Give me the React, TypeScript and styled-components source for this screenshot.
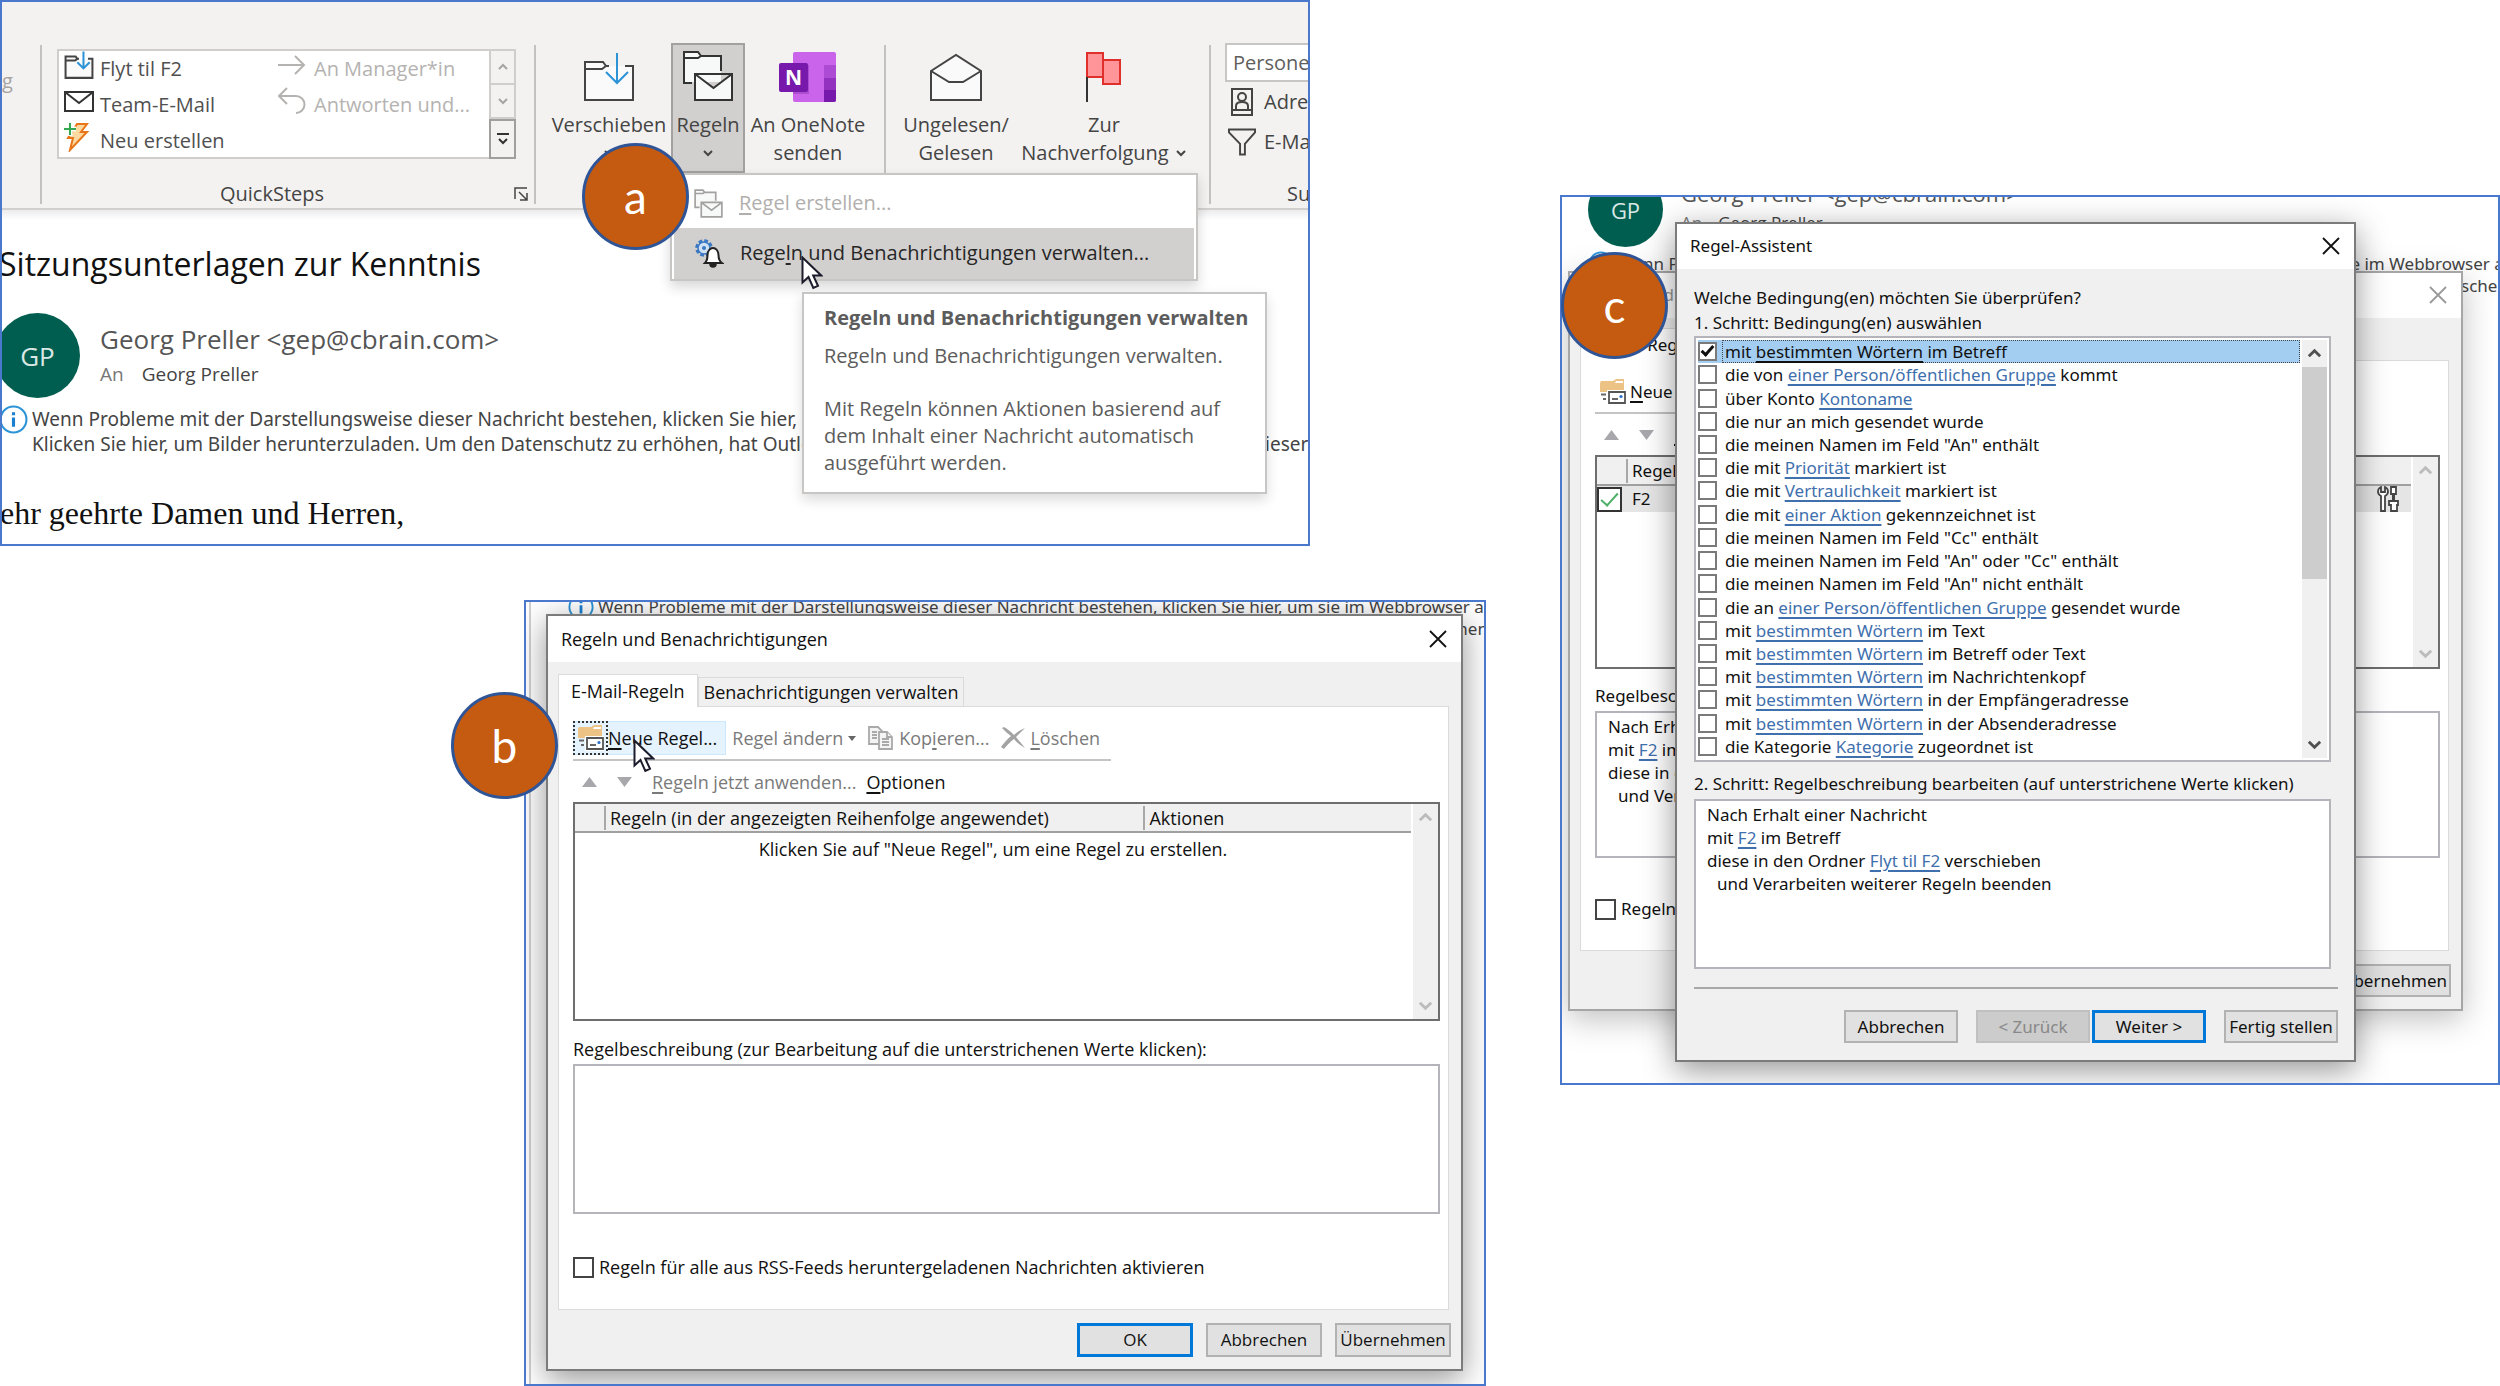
import React from 'react';
import styled, { createGlobalStyle, css, ThemeProvider } from 'styled-components';

const GlobalStyle = createGlobalStyle`
  *, *::before, *::after { box-sizing: border-box; }
  body { margin: 0; background: #fff; color: #111; font-family: "Open Sans", "Noto Sans", sans-serif; }
  button, input { font: inherit; color: inherit; margin: 0; }
`;

/* ---------- page ---------- */

const Page = styled.main`
  display: grid;
  grid-template-columns: minmax(0, 1486fr) minmax(0, 940fr);
  column-gap: 74px;
  align-items: start;
`;

const Column = styled.div<{ $top?: number }>`
  display: flex;
  flex-direction: column;
  padding-top: ${p => p.$top ?? 0}px;
`;

const Figure = styled.section<{ $indent?: number; $outdent?: number; $top?: number }>`
  position: relative;
  margin: ${p => p.$top ?? 0}px ${p => p.$outdent ?? 0}px 0 ${p => p.$indent ?? 0}px;
`;

const Shot = styled.div`
  position: relative;
  overflow: hidden;
  border: 2px solid #4a78cc;
  background: #fff;
`;

const Badge = styled.span<{ $left: number; $top: number }>`
  position: absolute;
  left: ${p => p.$left}px;
  top: ${p => p.$top}px;
  z-index: 5;
  width: 107px;
  height: 107px;
  display: flex;
  align-items: center;
  justify-content: center;
  border: 3px solid #2f5597;
  border-radius: 50%;
  background: #c55a11;
  color: #fff;
  font: 46px/60px Lato, "Open Sans", sans-serif;
`;

const Pointer = styled.svg<{ $left: number; $top: number }>`
  position: absolute;
  left: ${p => p.$left}px;
  top: ${p => p.$top}px;
  z-index: 4;
  width: 22px;
  height: 34px;
`;

const Cursor = ({ left, top }: { left: number; top: number }) => (
  <Pointer $left={left} $top={top} viewBox="0 0 22 34" aria-hidden="true">
    <path d="M1.5 1.5v25l6-5.500 4.800 11 4.700-2.200-4.800-10.300h8z" fill="#fff" stroke="#1c1c2c" strokeWidth="2" />
  </Pointer>
);

/* ---------- icons ---------- */

const FolderDown = ({ w, h, stroke }: { w: number; h: number; stroke: number }) => (
  <svg width={w} height={h} viewBox="0 0 52 50" fill="none" strokeWidth={stroke} aria-hidden="true">
    <path d="M2 10h18l3 4h27v34H2z" fill="#fafafa" />
    <path d="M26 14h-3l-3-4H2v38h48V14h-8M2 17h17l4-3" stroke="#444" />
    <path d="M34 1v30M23 20l11 11 11-11" stroke="#2b93d6" />
  </svg>
);

const RulesIcon = ({ size, ink, stroke }: { size: number; ink: string; stroke: number }) => (
  <svg width={size} height={size} viewBox="0 0 52 52" fill="none" stroke={ink} strokeWidth={stroke} aria-hidden="true">
    <path d="M2 2h14l3 4h20v26H2z" fill="#f6f9f8" stroke="none" />
    <path d="M10 33H2V2h14l3 4h20v15M2 8h14l3-2" />
    <path d="M13 24h37v26H13zM13 24l18.500 14L50 24" fill="#f6f9f8" />
  </svg>
);

const OneNoteIcon = () => (
  <svg width="58" height="50" viewBox="0 0 58 50" aria-hidden="true">
    <path d="M16 0h39a2 2 0 0 1 2 2v46a2 2 0 0 1-2 2H16a2 2 0 0 1-2-2V2a2 2 0 0 1 2-2z" fill="#ca64ea" />
    <path d="M45 13h12v13H45z" fill="#ae4bd5" />
    <path d="M45 26h12v12H45z" fill="#9332bf" />
    <path d="M45 38h12v10a2 2 0 0 1-2 2H45z" fill="#7719aa" />
    <path d="M14 13h16v29H14z" fill="#9a3fc0" opacity=".6" />
    <rect x="0" y="11" width="29" height="29" rx="2" fill="#7719aa" />
    <text x="14.500" y="33" textAnchor="middle" fontFamily="Open Sans" fontWeight="700" fontSize="21" fill="#fff">N</text>
  </svg>
);

const OpenMail = () => (
  <svg width="52" height="50" viewBox="0 0 52 50" fill="#fafafa" stroke="#444" strokeWidth="2" aria-hidden="true">
    <path d="M1 19L26 3l25 16v29H1z" />
    <path d="M1 19l18 11h14l18-11" fill="none" />
  </svg>
);

const FlagIcon = () => (
  <svg width="36" height="50" viewBox="0 0 36 50" aria-hidden="true">
    <path d="M1 1h16v24H1z" fill="#ff9499" stroke="#e0302c" strokeWidth="2" />
    <path d="M17 8h17v24H17z" fill="#ff9499" stroke="#e0302c" strokeWidth="2" />
    <path d="M1 25v25" stroke="#333" strokeWidth="2" />
  </svg>
);

const MailIcon = () => (
  <svg width="30" height="21" viewBox="0 0 30 21" fill="#fff" stroke="#333" strokeWidth="2" aria-hidden="true">
    <path d="M1 1h28v19H1zM1 1l14 11L29 1" />
  </svg>
);

const BoltIcon = () => (
  <svg width="26" height="30" viewBox="0 0 26 30" aria-hidden="true">
    <path d="M13 2h10l-6 8h6L6 28l3-12H4z" fill="#fbd9a0" stroke="#e8751a" strokeWidth="2" />
    <path d="M6 0v14M0 7h12" stroke="#f7fff7" strokeWidth="5" />
    <path d="M6 1v12M0 7h12" stroke="#35a853" strokeWidth="2" />
  </svg>
);

const ArrowRight = () => (
  <svg width="28" height="20" viewBox="0 0 28 20" fill="none" stroke="#b5b3b1" strokeWidth="2" aria-hidden="true">
    <path d="M0 10h26M17 1l9 9-9 9" />
  </svg>
);

const ReplyIcon = () => (
  <svg width="28" height="28" viewBox="0 0 28 28" fill="none" stroke="#b5b3b1" strokeWidth="2" aria-hidden="true">
    <path d="M9 1L1 9l8 8M1 9h17a8.500 8.500 0 0 1 0 17" />
  </svg>
);

const BookIcon = () => (
  <svg width="24" height="28" viewBox="0 0 24 28" fill="none" stroke="#444" strokeWidth="2" aria-hidden="true">
    <path d="M2 1h20v26H2zM2 22h20M6 22v-4c0-3 3-4 6-4s6 1 6 4v4" />
    <circle cx="12" cy="9" r="4" />
  </svg>
);

const FunnelIcon = () => (
  <svg width="29" height="28" viewBox="0 0 29 28" fill="none" stroke="#444" strokeWidth="2" aria-hidden="true">
    <path d="M1 1h27v3L17.500 16v11h-5V16L1 4z" />
  </svg>
);

const GearBell = () => (
  <svg width="30" height="30" viewBox="0 0 30 30" fill="none" aria-hidden="true">
    <circle cx="10" cy="10" r="7" stroke="#3a78c2" strokeWidth="3.500" strokeDasharray="3.600 1.900" />
    <circle cx="10" cy="10" r="6" fill="#cfe2f5" stroke="#3a78c2" strokeWidth="1.500" />
    <circle cx="10" cy="10" r="2" fill="#3a78c2" />
    <path d="M11 25c2-2 2.500-4 2.500-8 0-4 2.500-7 5.500-7s5.500 3 5.500 7c0 4 .5 6 3.500 8z" fill="#fff" stroke="#222" strokeWidth="2" />
    <path d="M16 26a3 3 0 0 0 6 0" fill="#222" stroke="#222" strokeWidth="1.500" />
  </svg>
);

const Launcher = () => (
  <svg width="14" height="14" viewBox="0 0 14 14" fill="none" stroke="#444" strokeWidth="1.500" aria-hidden="true">
    <path d="M1 12V1h12M5 5l8 8M13 6v7H6" />
  </svg>
);

const Chevron = ({ up, ink, size = 12, bar, stroke = 2 }: { up?: boolean; ink: string; size?: number; bar?: boolean; stroke?: number }) => (
  <svg width={size} height={size} viewBox="0 0 12 12" fill="none" stroke={ink} strokeWidth={stroke} aria-hidden="true">
    <path d={up ? 'M2 8l4-4 4 4' : bar ? 'M2 6l4 4 4-4M0 1h12' : 'M2 4l4 4 4-4'} />
  </svg>
);

const InfoIcon = ({ size }: { size: number }) => (
  <svg width={size} height={size} viewBox="0 0 28 28" fill="none" aria-hidden="true">
    <circle cx="14" cy="14" r="12.500" stroke="#2b93d6" strokeWidth="2" />
    <path d="M14 12v9M14 7v3" stroke="#1a7fd0" strokeWidth="3" />
  </svg>
);

const NewRuleIcon = () => (
  <svg width="26" height="26" viewBox="0 0 26 26" aria-hidden="true">
    <path d="M0 4l1-2h12l3-2h8v13H0z" fill="#edc385" />
    <path d="M16 2h7v2h-8z" fill="#fff" />
    <path d="M7 11h19v15H7z" fill="#fff" />
    <path d="M9 13h16v11H9z" fill="#fff" stroke="#555" strokeWidth="1.800" />
    <path d="M12 20h6M1 15.500h5M3 20h3" stroke="#666" strokeWidth="1.800" />
    <circle cx="21" cy="17.500" r="1.600" fill="#2a6fc9" />
  </svg>
);

const CopyIcon = () => (
  <svg width="26" height="24" viewBox="0 0 26 24" fill="#f4f4f4" stroke="#a9a9a9" strokeWidth="1.800" aria-hidden="true">
    <path d="M1 1h9l4 4v13H1z" />
    <path d="M4 6h5M4 9h5M4 12h5" />
    <path d="M11 6h8l5 5v12H11z" />
    <path d="M19 6v5h5M14 13h7M14 16h7M14 19h7" />
  </svg>
);

const DeleteIcon = () => (
  <svg width="24" height="22" viewBox="0 0 24 22" fill="#a3a3a3" aria-hidden="true">
    <path d="M3 0c4 2 7 5 10 8 3-3 6-5 11-7-3 3-6 6-9 9 3 4 6 7 9 11-4-2-8-5-11-9-4 3-7 6-10 10L0 20c3-4 6-8 10-11C7 7 4 4 1 1z" />
  </svg>
);

const ToolsIcon = () => (
  <svg width="22" height="26" viewBox="0 0 22 26" fill="#fff" stroke="#444" strokeWidth="1.800" aria-hidden="true">
    <path d="M4 1C0 3 0 8 4 10v15h4V10c4-2 4-7 0-9v5H4z" />
    <path d="M14 1h5v7h-5zM12 15h9v4h-1v6h-6v-6h-2z" />
    <path d="M16.500 8v7" strokeWidth="3" />
  </svg>
);

const CloseIcon = ({ ink }: { ink: string }) => (
  <svg width="18" height="18" viewBox="0 0 18 18" stroke={ink} strokeWidth="1.800" aria-hidden="true">
    <path d="M1 1l16 16M17 1L1 17" />
  </svg>
);

const Triangle = ({ up }: { up?: boolean }) => (
  <svg width="15" height="10" viewBox="0 0 15 10" fill="#a8a8ac" aria-hidden="true">
    <path d={up ? 'M0 10L7.500 0 15 10z' : 'M0 0h15L7.500 10z'} />
  </svg>
);

/* ---------- figure a: ribbon and mail ---------- */

const Ribbon = styled.header`
  display: flex;
  height: 208px;
  padding-top: 41px;
  overflow: hidden;
  background: #f3f2f1;
  border-bottom: 2px solid #d2d0ce;
  color: #444;
  font-size: 20px;
  line-height: 28px;
  white-space: nowrap;
`;

const RibbonShade = styled.div`
  height: 10px;
  background: linear-gradient(#ececec, #fff);
`;

const RibbonEdge = styled.div`
  width: 38px;
  flex: none;
  padding-top: 24px;
  color: #a6a4a2;
`;

const Group = styled.div<{ $width?: number }>`
  display: flex;
  flex-direction: column;
  justify-content: space-between;
  flex: ${p => (p.$width ? `0 0 ${p.$width}px` : '1 0 auto')};
  height: 159px;
  margin-top: 2px;
  border-left: 2px solid #c4c2c0;
`;

const GroupTitle = styled.div`
  display: flex;
  align-items: center;
  justify-content: center;
  padding-right: 6px;
  height: 20px;
`;

const TitleText = styled.span`
  flex: 1;
  text-align: center;
  padding-right: 12px;
`;

const PlainButton = styled.button`
  display: inline-flex;
  align-items: center;
  justify-content: center;
  padding: 0;
  border: 0;
  background: none;
`;

const Gallery = styled.div`
  display: flex;
  margin: 4px 18px 0 15px;
  height: 110px;
  background: #fff;
  border: 2px solid #d0cecc;
`;

const GalleryGrid = styled.div`
  flex: 1;
  display: grid;
  grid-template-columns: 214px 1fr;
  grid-template-rows: repeat(3, 36px);
  padding-left: 5px;
`;

const QuickStep = styled.button<{ $off?: boolean }>`
  display: flex;
  align-items: flex-start;
  gap: 6px;
  padding: 4px 0 0;
  border: 0;
  background: none;
  color: ${p => (p.$off ? '#b5b3b1' : '#505050')};
  svg { flex: none; }
`;

const StepIcon = styled.span`
  width: 30px;
  height: 30px;
  margin-top: -5px;
  display: flex;
  justify-content: flex-start;
  align-items: center;
`;

const GalleryScroll = styled.div`
  width: 25px;
  display: grid;
  grid-template-rows: 34px 34px 1fr;
`;

const ScrollKey = styled.button<{ $strong?: boolean }>`
  display: flex;
  align-items: center;
  justify-content: center;
  padding: 0;
  background: #f3f2f1;
  border: 0 solid #d0cecc;
  border-left-width: 2px;
  border-bottom-width: 2px;
  ${p => p.$strong && css`
    border: 2px solid #a19f9d;
    margin: 0 -2px -2px 0;
  `}
`;

const Buttons = styled.div<{ $pad: number }>`
  display: flex;
  margin-top: -2px;
  padding-left: ${p => p.$pad}px;
`;

const BigButton = styled.button<{ $width: number; $open?: boolean }>`
  width: ${p => p.$width}px;
  height: 130px;
  flex: none;
  display: flex;
  flex-direction: column;
  align-items: center;
  gap: 9px;
  padding: 7px 0 0;
  border: 2px solid ${p => (p.$open ? '#a3a19f' : 'transparent')};
  background: ${p => (p.$open ? '#d2d0ce' : 'none')};
`;

const BigIcon = styled.span`
  height: 50px;
  display: flex;
  align-items: flex-end;
`;

const BigLabel = styled.span`
  display: flex;
  flex-direction: column;
  align-items: center;
`;

const LabelLine = styled.span`
  height: 28px;
  display: flex;
  align-items: center;
  gap: 6px;
`;

const SearchGroup = styled.div`
  display: flex;
  flex-direction: column;
  margin-top: -2px;
  padding-left: 14px;
`;

const SearchBox = styled.input`
  width: 220px;
  height: 39px;
  padding: 0 6px;
  border: 2px solid #c8c6c4;
  background: #fff;
  &::placeholder { color: #605e5c; opacity: 1; }
`;

const SearchRow = styled.button`
  display: flex;
  align-items: center;
  gap: 8px;
  height: 40px;
  padding: 0 0 0 3px;
  border: 0;
  background: none;
  svg { width: 28px; }
`;

const SearchTitle = styled.span`
  padding-left: 76px;
  line-height: 20px;
`;

const Mail = styled.article`
  margin-left: -3px;
  padding: 22px 0 13px;
`;

const Subject = styled.h1`
  margin: 0;
  font-weight: 400;
  font-size: 32px;
  line-height: 44px;
  color: #111;
`;

const Sender = styled.div`
  display: flex;
  gap: 20px;
  margin: 27px 0 0 -4px;
`;

const Avatar = styled.span<{ $size: number }>`
  width: ${p => p.$size}px;
  height: ${p => p.$size}px;
  flex: none;
  display: flex;
  align-items: center;
  justify-content: center;
  border-radius: 50%;
  background: #005e50;
  color: #d9e8e4;
  font-size: ${p => (p.$size > 80 ? 26 : 22)}px;
`;

const SenderLines = styled.div<{ $small?: boolean }>`
  display: flex;
  flex-direction: column;
  gap: ${p => (p.$small ? 3 : 5)}px;
  padding-top: ${p => (p.$small ? 6 : 8)}px;
  color: #444;
`;

const SenderName = styled.span<{ $small?: boolean }>`
  font-size: ${p => (p.$small ? 22 : 26)}px;
  line-height: ${p => (p.$small ? 30 : 36)}px;
  color: #555;
`;

const Recipient = styled.span<{ $small?: boolean }>`
  display: flex;
  gap: ${p => (p.$small ? 16 : 18)}px;
  font-size: ${p => (p.$small ? 17 : 19)}px;
  line-height: 24px;
`;

const Muted = styled.span`
  color: #777;
`;

const InfoBar = styled.div<{ $small?: boolean }>`
  display: flex;
  gap: 4px;
  margin: ${p => (p.$small ? 0 : '7px 0 0')};
  font-family: "Noto Sans", "Open Sans", sans-serif;
  font-size: ${p => (p.$small ? 17 : 19)}px;
  line-height: ${p => (p.$small ? 22 : 25)}px;
  color: #444;
  white-space: nowrap;
  svg { flex: none; }
`;

const InfoLines = styled.span<{ $small?: boolean }>`
  display: flex;
  flex-direction: column;
  padding-top: 2px;
`;

const InfoLine = styled.span`
  display: flex;
  gap: 18px;
`;

const Greeting = styled.p`
  margin: 38px 0 0;
  padding-left: 1px;
  font-family: "Liberation Serif", serif;
  font-size: 32px;
  line-height: 36px;
  color: #111;
`;

const Menu = styled.div`
  position: absolute;
  left: 670px;
  top: 173px;
  z-index: 2;
  width: 528px;
  height: 108px;
  padding: 0 2px;
  display: grid;
  grid-template-rows: 53px 51px;
  border: 2px solid #c8c6c4;
  background: #fff;
  box-shadow: 0 6px 12px rgba(0, 0, 0, 0.16);
  font-size: 20px;
  line-height: 28px;
`;

const MenuItem = styled.button<{ $hover?: boolean; $off?: boolean }>`
  display: flex;
  align-items: center;
  gap: 16px;
  padding: ${p => (p.$off ? '3px 0 0 20px' : '0 0 2px 20px')};
  border: 0;
  background: ${p => (p.$hover ? '#d2d0ce' : 'none')};
  color: ${p => (p.$off ? '#b1afad' : '#262626')};
`;

const Tooltip = styled.div`
  position: absolute;
  left: 802px;
  top: 292px;
  z-index: 3;
  width: 465px;
  height: 202px;
  padding: 10px 0 0 20px;
  border: 2px solid #c8c6c4;
  background: #fff;
  box-shadow: 0 6px 12px rgba(0, 0, 0, 0.14);
  color: #5c5c5c;
  font-size: 20px;
  line-height: 27px;
  white-space: nowrap;
`;

const TipTitle = styled.strong`
  display: block;
  margin-bottom: 11px;
`;

const TipText = styled.p`
  margin: 0 0 26px;
`;

const U = styled.u`
  text-underline-offset: 3px;
  text-decoration-thickness: 2px;
`;

const Info = ({ small }: { small?: boolean }) => (
  <InfoBar $small={small}>
    <InfoIcon size={small ? 26 : 29} />
    <InfoLines>
      <InfoLine>Wenn Probleme mit der Darstellungsweise dieser Nachricht bestehen, klicken Sie hier, um sie im Webbrowser anzuzeigen.</InfoLine>
      <InfoLine>
        <span>Klicken Sie hier, um Bilder herunterzuladen. Um den Datenschutz zu erhöhen, hat Outlook</span>
        <span>den automatischen Download von Bildern in dieser Nachricht verhindert.</span>
      </InfoLine>
    </InfoLines>
  </InfoBar>
);

function RibbonFigure() {
  return (
    <Figure $outdent={176}>
      <Shot>
        <Ribbon>
          <RibbonEdge>g</RibbonEdge>
          <Group $width={494}>
            <Gallery>
              <GalleryGrid>
                <QuickStep><StepIcon><FolderDown w={30} h={28} stroke={3.6} /></StepIcon>Flyt til F2</QuickStep>
                <QuickStep $off><StepIcon><ArrowRight /></StepIcon>An Manager*in</QuickStep>
                <QuickStep><StepIcon><MailIcon /></StepIcon>Team-E-Mail</QuickStep>
                <QuickStep $off><StepIcon><ReplyIcon /></StepIcon>Antworten und...</QuickStep>
                <QuickStep><StepIcon><BoltIcon /></StepIcon>Neu erstellen</QuickStep>
              </GalleryGrid>
              <GalleryScroll>
                <ScrollKey aria-label="Nach oben"><Chevron up ink="#a6a4a2" /></ScrollKey>
                <ScrollKey aria-label="Nach unten"><Chevron ink="#a6a4a2" /></ScrollKey>
                <ScrollKey $strong aria-label="Mehr"><Chevron bar ink="#333" /></ScrollKey>
              </GalleryScroll>
            </Gallery>
            <GroupTitle>
              <TitleText>QuickSteps</TitleText>
              <PlainButton aria-label="QuickSteps verwalten"><Launcher /></PlainButton>
            </GroupTitle>
          </Group>
          <Group $width={350}>
            <Buttons $pad={11}>
              <BigButton $width={124}>
                <BigIcon><FolderDown w={52} h={50} stroke={2} /></BigIcon>
                <BigLabel><LabelLine>Verschieben</LabelLine><LabelLine><Chevron ink="#444" /></LabelLine></BigLabel>
              </BigButton>
              <BigButton $width={74} $open>
                <BigIcon><RulesIcon size={52} ink="#333" stroke={2} /></BigIcon>
                <BigLabel><LabelLine>Regeln</LabelLine><LabelLine><Chevron ink="#444" /></LabelLine></BigLabel>
              </BigButton>
              <BigButton $width={126}>
                <BigIcon><OneNoteIcon /></BigIcon>
                <BigLabel><LabelLine>An OneNote</LabelLine><LabelLine>senden</LabelLine></BigLabel>
              </BigButton>
            </Buttons>
          </Group>
          <Group $width={325}>
            <Buttons $pad={13}>
              <BigButton $width={114}>
                <BigIcon><OpenMail /></BigIcon>
                <BigLabel><LabelLine>Ungelesen/</LabelLine><LabelLine>Gelesen</LabelLine></BigLabel>
              </BigButton>
              <BigButton $width={182}>
                <BigIcon><FlagIcon /></BigIcon>
                <BigLabel><LabelLine>Zur</LabelLine><LabelLine>Nachverfolgung <Chevron ink="#444" /></LabelLine></BigLabel>
              </BigButton>
            </Buttons>
          </Group>
          <Group>
            <SearchGroup>
              <SearchBox aria-label="Personen suchen" placeholder="Personen suchen" />
              <SearchRow><BookIcon />Adressbuch</SearchRow>
              <SearchRow><FunnelIcon />E-Mail filtern</SearchRow>
            </SearchGroup>
            <SearchTitle>Suchen</SearchTitle>
          </Group>
        </Ribbon>
        <RibbonShade />
        <Mail>
          <Subject>Sitzungsunterlagen zur Kenntnis</Subject>
          <Sender>
            <Avatar $size={85}>GP</Avatar>
            <SenderLines>
              <SenderName>Georg Preller &lt;gep@cbrain.com&gt;</SenderName>
              <Recipient><Muted>An</Muted>Georg Preller</Recipient>
            </SenderLines>
          </Sender>
          <Info />
          <Greeting>ehr geehrte Damen und Herren,</Greeting>
        </Mail>
      </Shot>
      <Menu>
        <MenuItem $off><RulesIcon size={29} ink="#a3a19f" stroke={3} /><span><U>R</U>egel erstellen...</span></MenuItem>
        <MenuItem $hover><GearBell /><span>Rege<U>l</U>n und Benachrichtigungen verwalten...</span></MenuItem>
      </Menu>
      <Tooltip role="tooltip">
        <TipTitle>Regeln und Benachrichtigungen verwalten</TipTitle>
        <TipText>Regeln und Benachrichtigungen verwalten.</TipText>
        <TipText>Mit Regeln können Aktionen basierend auf<br />dem Inhalt einer Nachricht automatisch<br />ausgeführt werden.</TipText>
      </Tooltip>
      <Cursor left={801} top={256} />
      <Badge $left={582} $top={143}>a</Badge>
    </Figure>
  );
}

/* ---------- dialogs ---------- */

const regular = {
  font: '"Open Sans", "Noto Sans", sans-serif', size: 18, buttonSize: 17, titleBar: 46, tabsTop: 12, toolTop: 14, key: 34,
  tableHeight: 219, labelTop: 16, areaHeight: 150, tickTop: 41, panelEnd: 30, footTop: 13, footEnd: 12,
  buttonWidth: 116, buttonHeight: 34, gap: 13,
};
const compact = {
  font: '"Noto Sans", "Open Sans", sans-serif', size: 17, buttonSize: 17, titleBar: 45, tabsTop: 10, toolTop: 14, key: 33,
  tableHeight: 214, labelTop: 15, areaHeight: 147, tickTop: 39, panelEnd: 29, footTop: 13, footEnd: 12,
  buttonWidth: 114, buttonHeight: 33, gap: 13,
};
type Metrics = typeof regular;
const m = (k: keyof Metrics) => (p: any) => `${p.theme[k]}px`;

const Dialog = styled.div<{ $dim?: boolean }>`
  position: relative;
  isolation: isolate;
  border: 2px solid ${p => (p.$dim ? '#a6a6a6' : '#7b7b7b')};
  background: #f0f0f0;
  box-shadow: 0 8px 30px rgba(0, 0, 0, ${p => (p.$dim ? 0.25 : 0.42)});
  font-family: ${p => p.theme.font};
  font-size: ${m('size')};
  line-height: 24px;
  white-space: nowrap;
`;

const TitleBar = styled.div<{ $dim?: boolean }>`
  display: flex;
  align-items: center;
  justify-content: space-between;
  height: ${m('titleBar')};
  padding: 0 14px 1px 13px;
  background: #fff;
  color: ${p => (p.$dim ? '#999' : '#111')};
`;

const Tabs = styled.div`
  display: flex;
  align-items: flex-end;
  padding: ${m('tabsTop')} 0 0 10px;
`;

const Tab = styled.button<{ $on?: boolean }>`
  position: relative;
  height: ${p => (p.$on ? 33 : 29)}px;
  margin-bottom: ${p => (p.$on ? -1 : 0)}px;
  padding: 0 ${p => (p.$on ? 12 : 5)}px;
  z-index: ${p => (p.$on ? 1 : 0)};
  border: 1px solid #dadada;
  border-bottom: 0;
  background: ${p => (p.$on ? '#fff' : '#f0f0f0')};
`;

const TabPanel = styled.div`
  margin: 0 12px 0 10px;
  padding: ${m('toolTop')} 8px ${m('panelEnd')} 14px;
  border: 1px solid #dadada;
  background: #fff;
`;

const Toolbar = styled.div`
  display: flex;
  align-items: center;
  width: 538px;
  padding-bottom: 4px;
  border-bottom: 2px solid #c4c4c4;
`;

const ToolButton = styled.button<{ $hover?: boolean; $off?: boolean; $lead?: number }>`
  display: flex;
  align-items: center;
  gap: ${p => (p.$off ? 5 : 0)}px;
  height: ${m('key')};
  margin-left: ${p => p.$lead ?? 0}px;
  padding: 0;
  border: 0;
  background: none;
  color: ${p => (p.$off ? '#7a7a7a' : '#111')};
  ${p => p.$hover && css`
    padding-right: 9px;
    background: #e5f3ff;
    box-shadow: inset 0 0 0 1px #cce8ff;
  `}
`;

const IconFocus = styled.span<{ $on?: boolean }>`
  display: flex;
  align-items: center;
  justify-content: center;
  width: 35px;
  height: 100%;
  border: 2px dotted ${p => (p.$on ? '#333' : 'transparent')};
`;

const OrderRow = styled.div`
  display: flex;
  align-items: center;
  height: 24px;
  margin: 9px 0 8px;
  padding-left: 9px;
`;

const OrderKey = styled(PlainButton)`
  width: 15px;
  height: 24px;
  margin-right: 20px;
`;

const TextButton = styled(PlainButton)<{ $off?: boolean }>`
  display: inline;
  margin-right: 10px;
  color: ${p => (p.$off ? '#7a7a7a' : '#111')};
`;

const ListFrame = styled.div`
  display: flex;
  align-items: stretch;
  height: ${m('tableHeight')};
  border: 2px solid #6e6e6e;
  background: #fff;
`;

const RuleTable = styled.table`
  flex: 1;
  align-self: flex-start;
  border-collapse: collapse;
  table-layout: fixed;
  th {
    height: 28px;
    padding: 0;
    text-align: left;
    font-weight: 400;
    background: #f0f0f0;
    border-bottom: 2px solid #a0a0a0;
  }
  td { padding: 0; }
`;

const MarkCol = styled.col`
  width: 29px;
`;

const ActionCol = styled.col`
  width: 32%;
`;

const HeadText = styled.span`
  display: block;
  height: 24px;
  line-height: 24px;
  padding-left: 4px;
  border-left: 2px solid #a8a8a8;
`;

const EmptyCell = styled.td`
  height: 32px;
  text-align: center;
`;

const RuleRow = styled.tr`
  height: 26px;
  background: #e5e5e5;
`;

const RuleName = styled.label`
  display: block;
  padding-left: 6px;
  line-height: 22px;
`;

const ToolCell = styled.td`
  text-align: right;
  svg { display: block; margin: 0 12px 0 auto; }
`;

const ScrollTrack = styled.div`
  width: 27px;
  flex: none;
  display: flex;
  flex-direction: column;
  align-items: center;
  justify-content: space-between;
  border-left: 2px solid #fff;
  background: #f0f0f0;
`;

const Thumb = styled.span`
  width: 100%;
  height: 212px;
  margin-bottom: auto;
  background: #cdcdcd;
`;

const TrackKey = styled(PlainButton)`
  width: 100%;
  height: 27px;
  flex: none;
`;

const FieldLabel = styled.div`
  margin: ${m('labelTop')} 0 3px;
`;

const Description = styled.div<{ $height: number }>`
  height: ${p => p.$height}px;
  padding: 2px 11px;
  border: 2px solid #b4b4ba;
  background: #fff;
  line-height: 23px;
`;

const DescLine = styled.div<{ $indent?: boolean }>`
  padding-left: ${p => (p.$indent ? 10 : 0)}px;
`;

const Link = styled.a<{ $dark?: boolean }>`
  color: ${p => (p.$dark ? '#111' : '#3f70ad')};
  text-decoration: underline;
  text-decoration-thickness: 2px;
  text-underline-offset: 3px;
`;

const TickRow = styled.div`
  display: flex;
  align-items: center;
  gap: 5px;
  margin-top: ${m('tickTop')};
`;

const Tick = styled.input<{ $size: number; $ink: string; $mark?: string }>`
  appearance: none;
  width: ${p => p.$size}px;
  height: ${p => p.$size}px;
  flex: none;
  display: grid;
  place-items: center;
  border: 2px solid ${p => p.$ink};
  background: #fff;
  &:checked::after {
    content: "";
    width: ${p => (p.$mark ? 17 : 13)}px;
    height: ${p => (p.$mark ? 9 : 7)}px;
    border: solid ${p => p.$mark ?? '#111'};
    border-width: 0 0 ${p => (p.$mark ? 2 : 3)}px ${p => (p.$mark ? 2 : 3)}px;
    transform: translateY(-2px) rotate(-48deg);
  }
`;

const Footer = styled.div`
  display: flex;
  justify-content: flex-end;
  gap: ${m('gap')};
  padding: ${m('footTop')} 10px ${m('footEnd')};
`;

const Push = styled.button<{ $primary?: boolean; $lead?: number }>`
  width: ${m('buttonWidth')};
  height: ${m('buttonHeight')};
  margin-left: ${p => p.$lead ?? 0}px;
  padding: 0;
  border: ${p => (p.$primary ? '3px solid #0078d7' : '2px solid #b2b2b2')};
  background: #e1e1e1;
  color: #111;
  font-size: ${m('buttonSize')};
  line-height: 24px;
  &:disabled {
    background: #ccc;
    border-color: #c0c0c0;
    color: #888;
  }
`;

function RulesDialog({ filled }: { filled?: boolean }) {
  const id = filled ? 'rss-c' : 'rss-b';
  return (
    <Dialog $dim={filled}>
      <TitleBar $dim={filled}>
        <span>Regeln und Benachrichtigungen</span>
        <PlainButton aria-label="Schließen"><CloseIcon ink={filled ? '#999' : '#111'} /></PlainButton>
      </TitleBar>
      <Tabs role="tablist">
        <Tab $on role="tab">E-Mail-Regeln</Tab>
        <Tab role="tab">Benachrichtigungen verwalten</Tab>
      </Tabs>
      <TabPanel>
        <Toolbar>
          <ToolButton $hover={!filled}>
            <IconFocus $on={!filled}><NewRuleIcon /></IconFocus>
            <span><U>N</U>eue Regel...</span>
          </ToolButton>
          {!filled && (
            <>
              <ToolButton $off $lead={6}>
                <span>Re<U>g</U>el ändern</span>
                <svg width="8" height="5" viewBox="0 0 8 5" fill="#666" aria-hidden="true"><path d="M0 0h8L4 5z" /></svg>
              </ToolButton>
              <ToolButton $off $lead={12}><CopyIcon /><span>Kop<U>i</U>eren...</span></ToolButton>
              <ToolButton $off $lead={12}><DeleteIcon /><span><U>L</U>öschen</span></ToolButton>
            </>
          )}
        </Toolbar>
        <OrderRow>
          <OrderKey aria-label="Nach oben"><Triangle up /></OrderKey>
          <OrderKey aria-label="Nach unten"><Triangle /></OrderKey>
          <TextButton $off={!filled}><U>R</U>egeln jetzt anwenden...</TextButton>
          {!filled && <TextButton><U>O</U>ptionen</TextButton>}
        </OrderRow>
        <ListFrame>
          <RuleTable>
            <colgroup><MarkCol /><col /><ActionCol /></colgroup>
            <thead>
              <tr>
                <th aria-label="Aktiv" />
                <th><HeadText>Regeln (in der angezeigten Reihenfolge angewendet)</HeadText></th>
                <th><HeadText>Aktionen</HeadText></th>
              </tr>
            </thead>
            <tbody>
              {filled ? (
                <RuleRow>
                  <td><Tick type="checkbox" id="rule-f2" defaultChecked $size={25} $ink="#333" $mark="#4fb06a" /></td>
                  <td><RuleName htmlFor="rule-f2">F2</RuleName></td>
                  <ToolCell><ToolsIcon /></ToolCell>
                </RuleRow>
              ) : (
                <tr><EmptyCell colSpan={3}>Klicken Sie auf "Neue Regel", um eine Regel zu erstellen.</EmptyCell></tr>
              )}
            </tbody>
          </RuleTable>
          <ScrollTrack>
            <TrackKey aria-label="Nach oben blättern"><Chevron up ink="#bcbcbc" size={17} /></TrackKey>
            <TrackKey aria-label="Nach unten blättern"><Chevron ink="#bcbcbc" size={17} /></TrackKey>
          </ScrollTrack>
        </ListFrame>
        <FieldLabel>Regelbeschreibung (zur Bearbeitung auf die unterstrichenen Werte klicken):</FieldLabel>
        <Description $height={filled ? 147 : 150}>{filled && <RuleText />}</Description>
        <TickRow>
          <Tick type="checkbox" id={id} $size={21} $ink="#444" />
          <label htmlFor={id}>Regeln für alle aus RSS-Feeds heruntergeladenen Nachrichten aktivieren</label>
        </TickRow>
      </TabPanel>
      <Footer>
        <Push $primary={!filled}>OK</Push>
        <Push>Abbrechen</Push>
        <Push>Übernehmen</Push>
      </Footer>
    </Dialog>
  );
}

const RuleText = () => (
  <>
    <DescLine>Nach Erhalt einer Nachricht</DescLine>
    <DescLine>mit <Link href="#wort">F2</Link> im Betreff</DescLine>
    <DescLine>diese in den Ordner <Link href="#ordner">Flyt til F2</Link> verschieben</DescLine>
    <DescLine $indent>und Verarbeiten weiterer Regeln beenden</DescLine>
  </>
);

const Backdrop = styled.div<{ $top: number; $left: number }>`
  position: absolute;
  inset: 0;
  overflow: hidden;
  padding-left: ${p => p.$left}px;
  & > :first-child { margin-top: ${p => p.$top}px; }
`;

const PaneLine = styled.span`
  position: absolute;
  inset: 0 auto 0 3px;
  border-left: 2px solid #d0d0d0;
`;

const Window = styled.div<{ $margin: string }>`
  position: relative;
  z-index: 1;
  margin: ${p => p.$margin};
`;

const BackWindow = styled.div`
  position: absolute;
  left: 6px;
  right: 35px;
  top: 74px;
`;

function RulesFigure() {
  return (
    <Figure $indent={524} $top={54}>
      <Shot>
        <Backdrop $top={-8} $left={42}>
          <Info small />
        </Backdrop>
        <PaneLine />
        <Window $margin="12px 21px 13px 20px">
          <ThemeProvider theme={regular}><RulesDialog /></ThemeProvider>
        </Window>
      </Shot>
      <Cursor left={109} top={139} />
      <Badge $left={-73} $top={92}>b</Badge>
    </Figure>
  );
}

/* ---------- figure c: rule wizard ---------- */

const Wizard = styled.form`
  padding: 16px 16px 17px 17px;
  line-height: 25px;
`;

const Step = styled.div`
  margin-top: 10px;
  line-height: 24px;
`;

const Conditions = styled.div`
  display: flex;
  height: 426px;
  margin: 1px 7px 0 0;
  padding: 2px;
  border: 2px solid #b4b4ba;
  background: #fff;
`;

const ConditionRows = styled.div`
  flex: 1;
  display: grid;
  grid-auto-rows: 1fr;
`;

const Condition = styled.div<{ $on?: boolean }>`
  display: flex;
  align-items: center;
  gap: 5px;
  min-height: 0;
  line-height: 23px;
  background: ${p => (p.$on ? '#a3cef1' : 'none')};
`;

const ConditionLabel = styled.label<{ $on?: boolean }>`
  flex: 1;
  height: 23px;
  line-height: 21px;
  padding-left: 2px;
  border: 1px dotted ${p => (p.$on ? '#444' : 'transparent')};
`;

const Rule = styled.hr`
  margin: 18px 0 21px;
  border: 0;
  border-top: 2px solid #a8a8a8;
`;

const WizardButtons = styled.div`
  display: flex;
  justify-content: flex-end;
`;

const DescriptionWrap = styled.div`
  margin: 3px 7px 0 0;
`;

const conditions: [string, string, string][] = [
  ['mit ', 'bestimmten Wörtern', ' im Betreff'],
  ['die von ', 'einer Person/öffentlichen Gruppe', ' kommt'],
  ['über Konto ', 'Kontoname', ''],
  ['die nur an mich gesendet wurde', '', ''],
  ['die meinen Namen im Feld "An" enthält', '', ''],
  ['die mit ', 'Priorität', ' markiert ist'],
  ['die mit ', 'Vertraulichkeit', ' markiert ist'],
  ['die mit ', 'einer Aktion', ' gekennzeichnet ist'],
  ['die meinen Namen im Feld "Cc" enthält', '', ''],
  ['die meinen Namen im Feld "An" oder "Cc" enthält', '', ''],
  ['die meinen Namen im Feld "An" nicht enthält', '', ''],
  ['die an ', 'einer Person/öffentlichen Gruppe', ' gesendet wurde'],
  ['mit ', 'bestimmten Wörtern', ' im Text'],
  ['mit ', 'bestimmten Wörtern', ' im Betreff oder Text'],
  ['mit ', 'bestimmten Wörtern', ' im Nachrichtenkopf'],
  ['mit ', 'bestimmten Wörtern', ' in der Empfängeradresse'],
  ['mit ', 'bestimmten Wörtern', ' in der Absenderadresse'],
  ['die Kategorie ', 'Kategorie', ' zugeordnet ist'],
];

function WizardDialog() {
  return (
    <Dialog>
      <TitleBar>
        <span>Regel-Assistent</span>
        <PlainButton aria-label="Schließen"><CloseIcon ink="#111" /></PlainButton>
      </TitleBar>
      <Wizard onSubmit={e => e.preventDefault()}>
        <div>Welche Bedingung(en) möchten Sie überprüfen?</div>
        <div>1. Schritt: Bedingung(en) auswählen</div>
        <Conditions>
          <ConditionRows>
            {conditions.map(([before, link, after], i) => (
              <Condition key={i} $on={i === 0}>
                <Tick type="checkbox" id={`cond-${i}`} defaultChecked={i === 0} $size={19} $ink="#7a7a7a" />
                <ConditionLabel htmlFor={`cond-${i}`} $on={i === 0}>
                  {before}{link && <Link href="#wert" $dark={i === 0}>{link}</Link>}{after}
                </ConditionLabel>
              </Condition>
            ))}
          </ConditionRows>
          <ScrollTrack>
            <TrackKey type="button" aria-label="Nach oben blättern"><Chevron up ink="#505050" size={17} /></TrackKey>
            <Thumb />
            <TrackKey type="button" aria-label="Nach unten blättern"><Chevron ink="#505050" size={17} /></TrackKey>
          </ScrollTrack>
        </Conditions>
        <Step>2. Schritt: Regelbeschreibung bearbeiten (auf unterstrichene Werte klicken)</Step>
        <DescriptionWrap>
          <Description $height={170}><RuleText /></Description>
        </DescriptionWrap>
        <Rule />
        <WizardButtons>
          <Push type="button">Abbrechen</Push>
          <Push type="button" $lead={18} disabled>&lt; Zurück</Push>
          <Push type="button" $lead={2} $primary>Weiter &gt;</Push>
          <Push type="button" $lead={18}>Fertig stellen</Push>
        </WizardButtons>
      </Wizard>
    </Dialog>
  );
}

const BackSender = styled.div`
  display: flex;
  gap: 18px;
`;

const BackInfo = styled.div`
  margin-top: 4px;
`;

function WizardFigure() {
  return (
    <Figure>
      <Shot>
        <Backdrop $top={-25} $left={26}>
          <BackSender>
            <Avatar $size={75}>GP</Avatar>
            <SenderLines $small>
              <SenderName $small>Georg Preller &lt;gep@cbrain.com&gt;</SenderName>
              <Recipient $small><Muted>An</Muted>Georg Preller</Recipient>
            </SenderLines>
          </BackSender>
          <BackInfo><Info small /></BackInfo>
        </Backdrop>
        <ThemeProvider theme={compact}>
          <BackWindow><RulesDialog filled /></BackWindow>
          <Window $margin="25px 142px 21px 113px"><WizardDialog /></Window>
        </ThemeProvider>
      </Shot>
      <Badge $left={1} $top={57}>c</Badge>
    </Figure>
  );
}

export default function App() {
  return (
    <>
      <GlobalStyle />
      <Page>
        <Column>
          <RibbonFigure />
          <RulesFigure />
        </Column>
        <Column $top={195}>
          <WizardFigure />
        </Column>
      </Page>
    </>
  );
}
